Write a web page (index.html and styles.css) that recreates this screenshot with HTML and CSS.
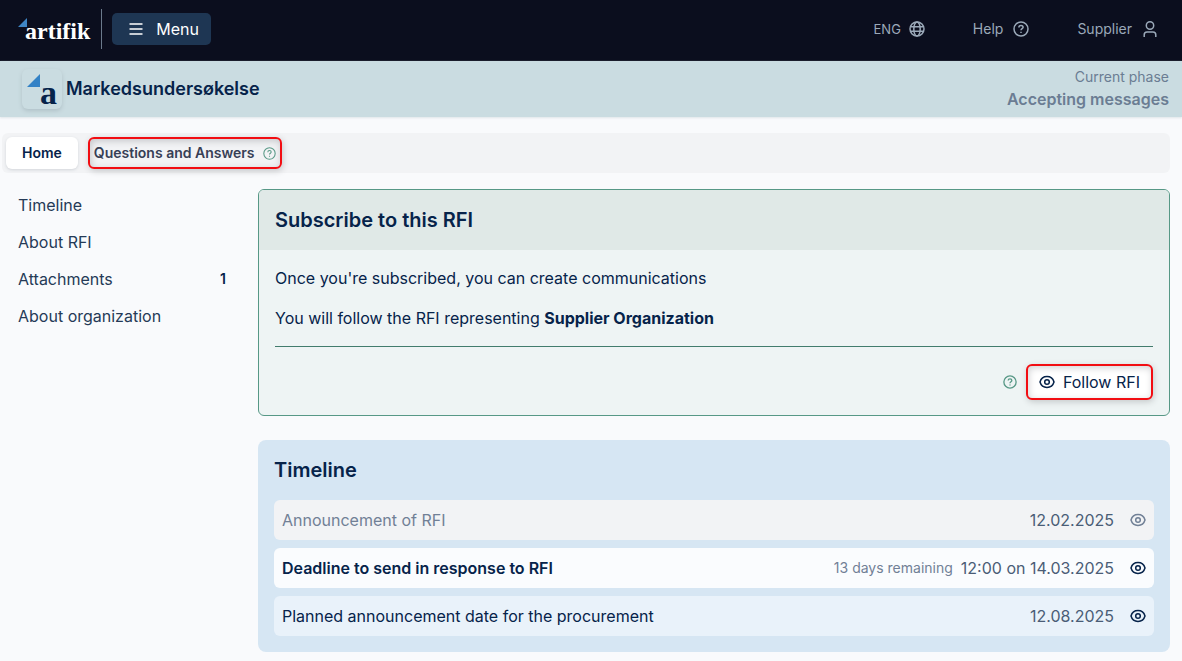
FILE: index.html
```html
<!DOCTYPE html>
<html lang="en">
<head>
<meta charset="utf-8">
<meta name="viewport" content="width=device-width, initial-scale=1">
<title>Markedsundersøkelse</title>
<link rel="stylesheet" href="styles.css">
</head>
<body>
<svg class="sprite" aria-hidden="true">
  <symbol id="eye" viewBox="0 0 16 16"><path d="M1 8C2 4.600 4.600 2.600 8 2.600S14 4.600 15 8C14 11.400 11.400 13.400 8 13.400S2 11.400 1 8Z"/><circle cx="8" cy="8" r="2.300"/></symbol>
  <symbol id="help" viewBox="0 0 16 16"><circle cx="8" cy="8" r="7"/><path d="M5.900 6.400C5.900 5.100 6.800 4.400 8 4.400S10.100 5.200 10.100 6.300C10.100 7.700 8 7.700 8 9.300M8 10.800V12.100"/></symbol>
</svg>
<header class="topbar">
  <a class="logo" href="#"><svg class="logo-mark" viewBox="0 0 9 9" aria-hidden="true"><path d="M0 9 9 0V9Z"/></svg><span>artifik</span></a>
  <button class="menu" type="button"><svg class="icon" viewBox="0 0 16 16" aria-hidden="true"><path d="M1.500 3H14.500M1.500 8H14.500M1.500 13H14.500"/></svg>Menu</button>
  <nav class="tools" aria-label="Account">
    <button class="tool tool-small" type="button">ENG <svg class="icon" viewBox="0 0 16 16" aria-hidden="true"><circle cx="8" cy="8" r="7"/><ellipse cx="8" cy="8" rx="3.200" ry="7"/><path d="M1.500 5.700H14.500M1.500 10.300H14.500"/></svg></button>
    <button class="tool" type="button">Help <svg class="icon" aria-hidden="true"><use href="#help"/></svg></button>
    <button class="tool" type="button">Supplier <svg class="icon" viewBox="0 0 16 16" aria-hidden="true"><circle cx="8" cy="4.500" r="3.700"/><path d="M2.200 16V14C2.200 12 3.200 11 5 11H11C12.800 11 13.800 12 13.800 14V16"/></svg></button>
  </nav>
</header>
<section class="subject">
  <div class="subject-logo"><svg class="subject-mark" viewBox="0 0 13 13" aria-hidden="true"><path d="M0 13 13 0V13Z"/></svg><span>a</span></div>
  <h1>Markedsundersøkelse</h1>
  <div class="phase"><span>Current phase</span><strong>Accepting messages</strong></div>
</section>
<main class="page">
  <nav class="tabs" aria-label="Sections">
    <a class="tab tab-active" href="#">Home</a>
    <a class="tab tab-marked" href="#">Questions and Answers <svg class="icon-small" aria-hidden="true"><use href="#help"/></svg></a>
  </nav>
  <div class="columns">
    <nav class="sidebar" aria-label="Contents">
      <a href="#timeline">Timeline</a>
      <a href="#about">About RFI</a>
      <a href="#attachments">Attachments <b>1</b></a>
      <a href="#organization">About organization</a>
    </nav>
    <div class="content">
      <section class="subscribe">
        <h2>Subscribe to this RFI</h2>
        <div class="subscribe-body">
          <p>Once you're subscribed, you can create communications</p>
          <p>You will follow the RFI representing <b>Supplier Organization</b></p>
          <div class="actions">
            <svg class="help-icon" role="img" aria-label="Help"><use href="#help"/></svg>
            <button class="follow" type="button"><svg class="eye" aria-hidden="true"><use href="#eye"/></svg>Follow RFI</button>
          </div>
        </div>
      </section>
      <section class="timeline" id="timeline">
        <h2>Timeline</h2>
        <ul>
          <li class="past"><span class="name">Announcement of RFI</span><time>12.02.2025</time><svg class="eye" aria-hidden="true"><use href="#eye"/></svg></li>
          <li class="current"><span class="name">Deadline to send in response to RFI</span><small>13 days remaining</small><time>12:00 on 14.03.2025</time><svg class="eye" aria-hidden="true"><use href="#eye"/></svg></li>
          <li><span class="name">Planned announcement date for the procurement</span><time>12.08.2025</time><svg class="eye" aria-hidden="true"><use href="#eye"/></svg></li>
        </ul>
      </section>
    </div>
  </div>
</main>
</body>
</html>
```

FILE: styles.css
```css
* { box-sizing: border-box; }
body {
  margin: 0;
  background: #f9fafc;
  color: #06234a;
  font: 16px/24px Inter, "Liberation Sans", sans-serif;
}
h1, h2, p, ul { margin: 0; padding: 0; }
a { color: inherit; text-decoration: none; }
button { border: 0; font: inherit; cursor: pointer; }
svg { flex: none; fill: none; stroke: currentColor; stroke-width: 1.5; }
.sprite { position: absolute; width: 0; height: 0; }
.icon { width: 16px; height: 16px; }
.icon-small { width: 13px; height: 13px; color: #579886; stroke-width: 1.3; }
.help-icon { width: 14px; height: 14px; color: #579886; }
.eye { width: 16px; height: 16px; }

.topbar {
  display: flex;
  align-items: center;
  min-height: 61px;
  padding: 0 24px 4px 18px;
  background: #0b0e1e;
}
.logo {
  display: flex;
  align-items: center;
  height: 40px;
  padding-right: 11px;
  border-right: 1px solid #6b7a8c;
  color: #fff;
  font: bold 24px/40px "Liberation Serif", serif;
}
.logo-mark { width: 9px; height: 9px; margin-bottom: 12px; fill: #3e86c6; stroke: none; }
.logo span { margin-left: -2px; padding-top: 4px; }
.menu {
  display: flex;
  align-items: center;
  gap: 12px;
  height: 32px;
  margin-left: 10px;
  padding: 0 12px 0 16px;
  border-radius: 5px;
  background: #1e3653;
  color: #fff;
}
.tools { display: flex; align-items: center; gap: 48px; margin-left: auto; }
.tool {
  display: flex;
  align-items: center;
  gap: 10px;
  padding: 0;
  background: none;
  color: #9ba9b9;
  font-size: 14px;
}
.tool-small { gap: 8px; font-size: 13px; }

.subject {
  display: flex;
  align-items: center;
  min-height: 56px;
  padding: 0 13px 0 22px;
  background: #cadce1;
  box-shadow: 0 1px 2px #dfe5ea;
}
.subject-logo {
  display: flex;
  width: 40px;
  height: 40px;
  margin-right: 4px;
  padding: 5px;
  border-radius: 6px;
  box-shadow: 0 2px 4px #b1c2c8;
  color: #06234a;
  font: bold 34px/38px "Liberation Serif", serif;
}
.subject-mark { width: 13px; height: 13px; fill: #3382c6; stroke: none; }
h1 { font-size: 18px; font-weight: 600; }
.phase {
  display: flex;
  flex-direction: column;
  align-items: flex-end;
  margin-left: auto;
  padding-bottom: 2px;
  color: #6b7d93;
  font-size: 14px;
  line-height: 22px;
}
.phase strong { font-size: 16px; font-weight: 600; }

.page { padding: 16px 12px 9px 2px; }
.tabs {
  display: flex;
  align-items: center;
  gap: 10px;
  min-height: 40px;
  padding: 0 4px;
  border-radius: 6px;
  background: #f2f3f5;
  font-size: 14px;
  font-weight: 600;
}
.tab { display: flex; align-items: center; height: 32px; border-radius: 6px; }
.tab-active { padding: 0 16px; background: #fff; box-shadow: 0 1px 3px #d2d5da; }
.tab-marked {
  gap: 8px;
  padding: 0 4px;
  border: 2px solid #f20d12;
  box-shadow: 1px 2px 6px #c5c6c9, inset 1px 2px 7px #c5c6c9;
  color: #374056;
}
.columns { display: grid; grid-template-columns: 208px minmax(0, 1fr); gap: 32px; padding-left: 16px; }
.sidebar { display: flex; flex-direction: column; gap: 13px; padding-top: 20px; color: #253a57; }
.sidebar a { display: flex; justify-content: space-between; }
.sidebar b { color: #06234a; font-size: 14px; font-weight: 600; }
.content { display: flex; flex-direction: column; gap: 24px; padding-top: 16px; }
h2 { font-size: 20px; font-weight: 600; line-height: 28px; }

.subscribe { overflow: hidden; border: 1px solid #579886; border-radius: 6px; background: #eef4f4; }
.subscribe h2 { padding: 16px; background: #e0e9e7; }
.subscribe-body { display: flex; flex-direction: column; gap: 16px; padding: 16px 16px 15px; }
.subscribe b { font-weight: 700; }
.actions {
  display: flex;
  align-items: center;
  justify-content: flex-end;
  gap: 9px;
  padding-top: 17px;
  border-top: 1px solid #427c6d;
}
.follow {
  display: flex;
  align-items: center;
  gap: 8px;
  height: 36px;
  padding: 0 11px;
  border: 2px solid #f20d12;
  border-radius: 6px;
  background: #fff;
  box-shadow: 1px 2px 6px #c5c9ca, inset 1px 2px 7px #d2d3d5;
  color: #06234a;
}
.timeline { padding: 16px; border-radius: 8px; background: #d6e6f3; }
.timeline ul { display: flex; flex-direction: column; gap: 8px; padding-top: 16px; list-style: none; }
.timeline li {
  display: flex;
  align-items: center;
  gap: 8px;
  min-height: 40px;
  padding: 0 8px;
  border-radius: 6px;
  background: #e9f2fa;
}
.timeline .name { margin-right: auto; }
.timeline time { margin-right: 8px; color: #4a5d76; }
.timeline small { color: #718096; font-size: 14px; }
.timeline .past { background: #f2f3f5; color: #718096; }
.timeline .current { background: #fafcfe; }
.current .name { font-weight: 600; }
```
